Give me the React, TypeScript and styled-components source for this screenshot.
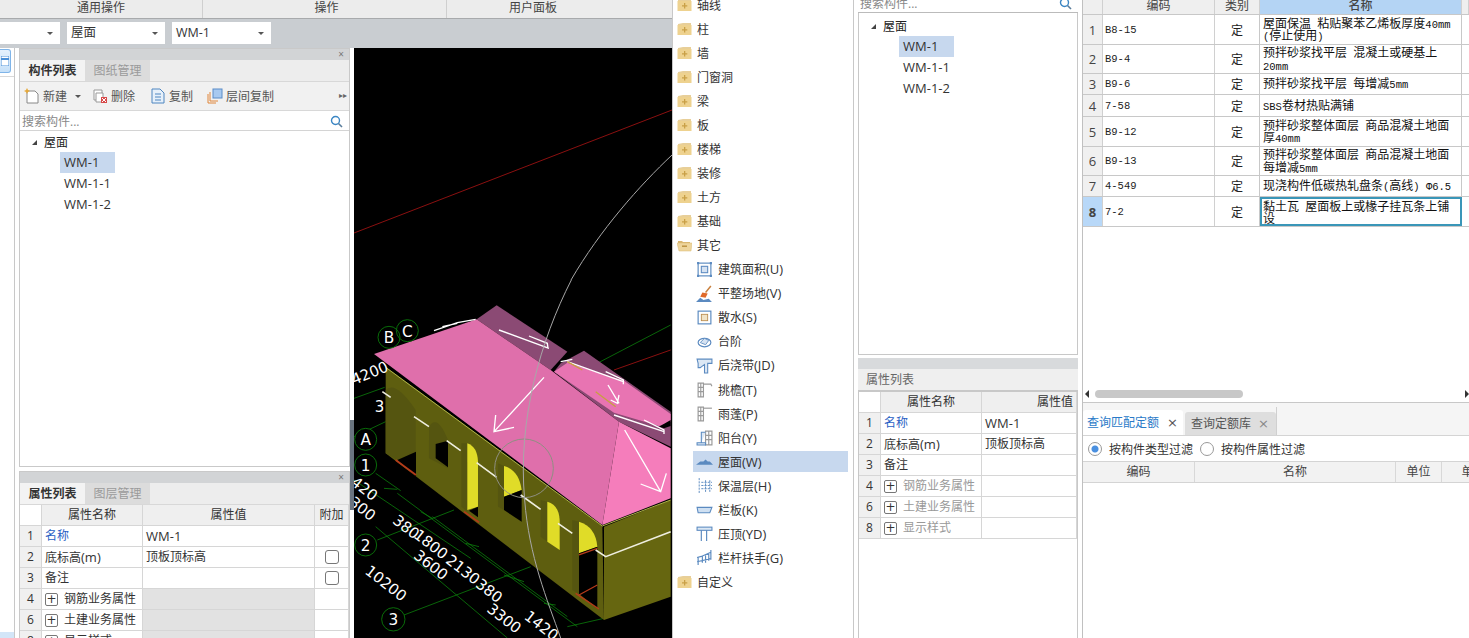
import React from 'react';
import styled, { createGlobalStyle } from 'styled-components';

const Global = createGlobalStyle`
  html, body { margin: 0; padding: 0; background: #fff; overflow: hidden; }
  * { box-sizing: border-box; }
  body { font-family: "Open Sans", "Noto Sans CJK SC", sans-serif; font-size: 12px; color: #333; }
`;

const Page = styled.div`
  width: 1469px; height: 638px; display: flex; overflow: hidden; background: #fff;
`;
const AppPane = styled.div`
  width: 672px; height: 638px; display: flex; flex-direction: column; flex: none;
`;
const Ribbon = styled.div`
  height: 19px; display: flex; background: #ececec; border-bottom: 1px solid #a8aaac; flex: none;
`;
const RibbonGroup = styled.div<{ $w: number; $last?: boolean; $pad?: number }>`
  width: ${p => p.$w}px; height: 18px; line-height: 15px; text-align: center; color: #444;
  padding-left: ${p => p.$pad ?? 0}px;
  border-right: ${p => (p.$last ? 'none' : '1px solid #cfcfcf')};
`;
const ComboBar = styled.div`
  height: 29px; background: #c9cdd1; display: flex; align-items: flex-start; gap: 7px; padding-top: 3px; flex: none;
`;
const Combo = styled.div<{ $w: number }>`
  width: ${p => p.$w}px; height: 22px; background: #fff; padding-left: 4px; line-height: 22px; font-size: 12.5px; position: relative;
  &::after { content: ''; position: absolute; right: 7px; top: 10px; border: 3px solid transparent; border-top: 3px solid #555; }
`;
const Body = styled.div`
  flex: 1; display: flex; min-height: 0;
`;
const Rail = styled.div`
  width: 15px; flex: none; border-right: 1px solid #c8c8c8; background: #fff; position: relative;
`;
const RailButton = styled.div`
  width: 11px; height: 24px; margin-top: 1px; border: 1px solid #7fb4e8; border-left: none; border-radius: 0 3px 3px 0; background: linear-gradient(#e4f1fd, #c6e0f8);
  display: flex; align-items: center; justify-content: center;
`;
const RailLine = styled.div`
  height: 1px; background: #d8d8d8; margin-top: 3px;
`;
const RailFoot = styled.div`
  position: absolute; left: 0; bottom: 0; width: 14px; height: 6px; background: #d3e6f8;
`;
const PanelColumn = styled.div`
  width: 331px; margin-left: 4px; flex: none; display: flex; flex-direction: column; gap: 4px; min-height: 0;
`;
const Panel = styled.div<{ $h?: number }>`
  border: 1px solid #c9c9c9; border-bottom-width: ${p => (p.$h ? 1 : 0)}px;
  ${p => (p.$h ? `height: ${p.$h}px; flex: none;` : 'flex: 1; min-height: 0;')}
  display: flex; flex-direction: column; overflow: hidden; background: #fff;
`;
const Grip = styled.div`
  height: 11px; flex: none; background: #d2d4d6; position: relative; color: #777; font-size: 10px; line-height: 10px; text-align: right; padding-right: 5px;
`;
const TabBar = styled.div`
  height: 22px; flex: none; background: #ededed; display: flex; border-bottom: 1px solid #d8d8d8;
`;
const PanelTab = styled.div<{ $on?: boolean }>`
  width: 65px; text-align: center; line-height: 22px; font-weight: ${p => (p.$on ? 700 : 400)};
  color: ${p => (p.$on ? '#333' : '#9a9a9a')}; background: ${p => (p.$on ? '#f3f3f3' : '#dcdcdc')};
`;
const ToolRow = styled.div`
  height: 29px; flex: none; background: #f1f1f1; display: flex; align-items: center; padding-left: 4px; color: #555; position: relative; border-bottom: 1px solid #d8d8d8;
`;
const Tool = styled.div<{ $ml: number }>`
  display: flex; align-items: center; gap: 3px; margin-left: ${p => p.$ml}px;
`;
const Overflow = styled.span`
  position: absolute; right: 2px; top: 7px; font-size: 8px; color: #666;
`;
const DropCaret = styled.span`
  width: 0; height: 0; border: 3px solid transparent; border-top: 3px solid #555; margin: 3px 0 0 5px;
`;
const SearchRow = styled.div<{ $h?: number }>`
  height: ${p => p.$h ?? 20}px; flex: none; border-bottom: 1px solid ${p => (p.$h ? '#bbb' : '#d4d4d4')}; display: flex; align-items: flex-end; justify-content: space-between;
  padding: 0 6px 0 2px; color: #888; line-height: 17px; background: #fff; overflow: hidden;
`;
const Tree = styled.div<{ $left: number; $top: number }>`
  padding: ${p => p.$top}px 0 0 ${p => p.$left}px; flex: 1; background: #fff;
`;
const TreeRoot = styled.div`
  height: 20px; line-height: 21px; display: flex; align-items: center; gap: 7px; font-size: 12px; color: #222;
`;
const Tri = styled.span`
  width: 0; height: 0; border-bottom: 5px solid #444; border-left: 5px solid transparent;
`;
const TreeItem = styled.div<{ $on?: boolean }>`
  width: 55px; height: 21px; line-height: 21px; margin-left: 28px; padding-left: 4px; white-space: nowrap;
  background: ${p => (p.$on ? '#c7d8ee' : 'transparent')}; color: #333; font-size: 13px;
`;
const PropGrid = styled.div<{ $cols: string }>`
  display: grid; grid-template-columns: ${p => p.$cols}; grid-auto-rows: 21px; flex: none;
`;
const Cell = styled.div<{ $bg?: string; $c?: string; $center?: boolean; $right?: boolean }>`
  border-right: 1px solid #d6d6d6; border-bottom: 1px solid #d6d6d6; line-height: 20px; padding: 0 3px; white-space: nowrap; overflow: hidden;
  background: ${p => p.$bg ?? '#fff'}; color: ${p => p.$c ?? '#333'};
  text-align: ${p => (p.$center ? 'center' : p.$right ? 'right' : 'left')};
  display: flex; align-items: center; gap: 6px; justify-content: ${p => (p.$center ? 'center' : p.$right ? 'flex-end' : 'flex-start')};
`;
const Latin = styled.span`
  font-size: 13px;
`;
const Plus = styled.span`
  width: 13px; height: 13px; border: 1px solid #777; border-radius: 2px; font-size: 12px; line-height: 10px; text-align: center; color: #333; font-family: "DejaVu Sans", sans-serif; flex: none;
`;
const Check = styled.span`
  width: 14px; height: 14px; border: 1px solid #777; border-radius: 3px; background: #fff;
`;
const Splitter = styled.div`
  width: 4px; flex: none; background: #fff; position: relative;
  &::after { content: ''; position: absolute; left: 0; top: 372px; width: 4px; height: 90px; background: #6a7480; }
`;
const Canvas = styled.div`
  flex: 1; background: #000; min-width: 0;
  svg { display: block; width: 100%; height: 100%; }
`;
const FolderPane = styled.div`
  width: 182px; flex: none; height: 638px; border-left: 1px solid #c8c8c8; border-right: 1px solid #c8c8c8; overflow: hidden; padding-left: 4px;
`;
const FolderList = styled.div`
  margin-top: -7px;
`;
const FolderRow = styled.div<{ $depth?: number }>`
  height: 24.04px; display: flex; align-items: center; color: #333; gap: 5px; padding-left: ${p => (p.$depth ? 16 : 0)}px; font-size: 12px;
`;
const LeafBand = styled.div<{ $on?: boolean }>`
  width: 155px; height: 21px; display: flex; align-items: center; gap: 5px; padding-left: 3px; background: ${p => (p.$on ? '#c7d8ee' : 'transparent')};
`;
const MiddlePane = styled.div`
  width: 220px; margin-left: 4px; flex: none; height: 638px; display: flex; flex-direction: column;
`;
const TreeBox = styled.div`
  height: 342px; flex: none; border: 1px solid #c8c8c8; border-top: none; display: flex;
`;
const GripPlain = styled.div`
  height: 11px; margin-top: 3px; flex: none; background: #d8dadc;
`;
const TitleBar = styled.div`
  height: 23px; flex: none; background: #efefef; line-height: 21px; padding-left: 8px; color: #666; border-bottom: 2px solid #c8c8c8;
`;
const MidTable = styled.div`
  border-left: 1px solid #c8c8c8; border-right: 1px solid #c8c8c8; flex: 1; overflow: hidden;
`;
const RightPane = styled.div`
  flex: 1; margin-left: 4px; height: 638px; border-left: 1px solid #c0c0c0; display: flex; flex-direction: column; min-width: 0; overflow: hidden;
`;
const QuotaHead = styled.div`
  height: 15px; flex: none; display: grid; grid-template-columns: 20px 112px 45px 202px 1fr; line-height: 12px; background: #f0f0f0; border-bottom: 1px solid #c8c8c8; color: #444;
`;
const HeadCell = styled.div<{ $on?: boolean }>`
  text-align: center; border-right: 1px solid #d0d0d0; background: ${p => (p.$on ? '#b4d4f4' : '#efefef')}; overflow: hidden; font-weight: ${p => (p.$on ? 500 : 400)};
`;
const QuotaRow = styled.div<{ $h: number }>`
  height: ${p => p.$h}px; flex: none; display: grid; grid-template-columns: 20px 112px 45px 202px 1fr; border-bottom: 1px solid #c8c8c8;
`;
const NumCell = styled.div<{ $on?: boolean }>`
  background: ${p => (p.$on ? '#b8d8f8' : '#f0f0f0')}; border-right: 1px solid #d0d0d0; display: flex; align-items: center; justify-content: center;
  font-size: 13px; color: #444; font-weight: ${p => (p.$on ? 700 : 400)};
`;
const CodeCell = styled.div`
  font-family: "Liberation Mono", monospace; font-size: 10.5px; color: #222; padding-left: 2px; display: flex; align-items: center; border-right: 1px solid #d0d0d0;
`;
const TypeCell = styled.div`
  display: flex; align-items: center; justify-content: center; border-right: 1px solid #c8c8c8; color: #222;
`;
const NameCell = styled.div<{ $edit?: boolean }>`
  font-size: 12px; line-height: 10.5px; color: #111; padding: 1px 0 0 3px; display: flex; align-items: center; border-right: 1px solid #c8c8c8;
  font-family: "Noto Sans CJK SC", sans-serif;
  ${p => (p.$edit ? 'outline: 2px solid #3a96b8; outline-offset: -2px;' : '')}
`;
const NameLine = styled.span`
  display: block; white-space: pre;
`;
const Mono = styled.span`
  font-family: "Liberation Mono", monospace; font-size: 10.5px;
`;
const QuotaBlank = styled.div`
  height: 160px; flex: none;
`;
const ScrollBar = styled.div`
  height: 14px; flex: none; display: flex; align-items: center; padding: 0 2px; position: relative; margin-bottom: 1px;
`;
const Thumb = styled.div`
  width: 148px; height: 8px; margin-left: 6px; border-radius: 4px; background: #c8c8c8;
`;
const ArrowL = styled.span`
  width: 0; height: 0; border: 4px solid transparent; border-right: 4px solid #333; border-left: none;
`;
const ArrowR = styled.span`
  position: absolute; right: 0; width: 0; height: 0; border: 4px solid transparent; border-left: 4px solid #333; border-right: none;
`;
const QueryTabs = styled.div`
  height: 34px; flex: none; display: flex; align-items: flex-end; background: #f5f5f5; border-top: 1px solid #c8c8c8; border-bottom: 1px solid #d4d4d4;
`;
const QueryTab = styled.div<{ $on?: boolean }>`
  height: ${p => (p.$on ? 25 : 23)}px; width: ${p => (p.$on ? 100 : 91)}px; margin-right: ${p => (p.$on ? 2 : 0)}px;
  background: ${p => (p.$on ? '#fff' : '#dedede')}; color: ${p => (p.$on ? '#2a7ac8' : '#555')};
  line-height: 24px; padding-left: ${p => (p.$on ? 4 : 6)}px; border-radius: 3px 3px 0 0; display: flex; gap: ${p => (p.$on ? 8 : 7)}px; align-items: center;
  font-size: 12px; white-space: nowrap;
  i { font-style: normal; font-size: 13px; color: ${p => (p.$on ? '#555' : '#888')}; font-family: "DejaVu Sans", sans-serif; }
`;
const TabEnd = styled.div`
  width: 1px; height: 28px; background: #d0d0d0;
`;
const RadioRow = styled.div`
  height: 26px; flex: none; display: flex; align-items: center; padding-left: 5px; background: #fff; border-bottom: 1px solid #d4d4d4; color: #333; gap: 7px;
`;
const Radio = styled.span<{ $on?: boolean }>`
  width: 14px; height: 14px; border-radius: 50%; border: 1px solid #999; flex: none; background: ${p => (p.$on ? 'radial-gradient(circle, #4a90e0 0 3px, #fff 4px)' : '#fff')};
`;
const LowerHead = styled.div`
  height: 21px; flex: none; display: grid; grid-template-columns: 112px 201px 46px 64px; background: #f2f2f2; border-bottom: 1px solid #d4d4d4; line-height: 20px; color: #444;
`;
const LowerCell = styled.div`
  text-align: center; border-right: 1px solid #d8d8d8; overflow: hidden; white-space: nowrap;
`;

const Folder = ({ open }: { open?: boolean }) => (
  <svg width="15" height="14" viewBox="0 0 15 14" style={{ flex: 'none' }}>
    {open ? (
      <>
        <path d="M1 3h4l1 1h7v2H4L1 6z" fill="#d9b56f" />
        <path d="M0 5h15l-1 8H2z" fill="#eed59c" stroke="#d8b873" strokeWidth=".5" />
        <rect x="5" y="7.5" width="5" height="1.4" fill="#b98f3e" />
      </>
    ) : (
      <>
        <path d="M1 2l5-1 8 0v3H1z" fill="#e8cf98" />
        <rect x="0.5" y="3" width="14" height="10" fill="#eed28f" />
        <path d="M7 5v2.2h-2v1.3h2v2h1.3v-2h2V7.200h-2V5z" fill="#c9a047" />
      </>
    )}
  </svg>
);

const B = '#5b8ac0';
const G = '#9a9a9a';
const Leaf = ({ k }: { k: string }) => {
  const p = { fill: 'none', stroke: B, strokeWidth: 1.1 };
  const q = { fill: 'none', stroke: G, strokeWidth: 1.1 };
  let c: React.ReactNode = null;
  if (k === 'area') c = <><rect x="2" y="2" width="12" height="12" {...p} /><rect x="5" y="5" width="6" height="6" fill="#d5e2f2" stroke={B} /><path d="M1 1h2v2H1zM13 1h2v2h-2zM1 13h2v2H1zM13 13h2v2h-2z" fill={B} /></>;
  if (k === 'site') c = <><path d="M9 7l5-6" stroke="#c9803e" strokeWidth="1.4" /><path d="M6 7l5 1-2 4-5-1z" fill="#e06a2a" /><path d="M0 16l4-4 3 2 5-1 3 3z" fill="#5b8ac0" /></>;
  if (k === 'apron') c = <><rect x="2" y="2" width="12" height="12" {...p} /><rect x="5" y="5" width="6" height="6" fill="#f1e3c6" stroke="#b98a4a" strokeWidth=".8" /></>;
  if (k === 'step') c = <><ellipse cx="8" cy="9" rx="6" ry="4" {...p} /><path d="M4 9l4-4 4 2-3 4z" fill="#d5e2f2" stroke={B} strokeWidth=".8" /></>;
  if (k === 'strip') c = <path d="M1 2h14v4H11v9H8V7L4 10H2V6z" fill="#dbe7f4" stroke={B} />;
  if (k === 'eave') c = <><path d="M2 2h5v13H2zM2 6h5M2 10h5M4.500 2v13" {...q} /><path d="M7 3h7l1 2" {...q} /></>;
  if (k === 'canopy') c = <><path d="M2 2h5v13H2zM2 6h5M2 10h5M4.500 2v13" {...q} /><path d="M7 3h8" {...q} /></>;
  if (k === 'balc') c = <><path d="M9 2h6v13H9zM9 6h6M9 10h6M12 2v13" {...q} /><path d="M1 13h8v2H1zM5 13V3h4" fill="#dbe7f4" stroke={B} /></>;
  if (k === 'roof') c = <path d="M0 11l4-3h3l2-2 2 2h2l3 3z" fill={B} />;
  if (k === 'ins') c = <path d="M3 1v14M9 3v11M13 3v11M5 5h10M5 8h10M5 11h10" stroke={B} strokeWidth=".9" strokeDasharray="2 1" fill="none" />;
  if (k === 'rail') c = <path d="M1 6h14l-2 5H2z" fill="#cfe0f2" stroke={B} />;
  if (k === 'coping') c = <><rect x="1" y="2" width="14" height="3" fill="#dbe7f4" stroke={B} /><path d="M5 5v10M10 5v10" {...p} /></>;
  if (k === 'hand') c = <path d="M1 8l4-1 9-4M2 8v7M6 7v6M9 6v7M12 4v7M14 1v9M1 12l13-3" {...p} />;
  return <svg width="17" height="17" viewBox="0 0 16 16" style={{ flex: 'none' }}>{c}</svg>;
};

const SearchGlyph = () => (
  <svg width="13" height="13" viewBox="0 0 13 13" style={{ marginBottom: 2 }}>
    <circle cx="5.5" cy="5.5" r="4" fill="none" stroke="#3b86c4" strokeWidth="1.4" />
    <path d="M8.500 8.500l3.500 3.500" stroke="#5a7d9c" strokeWidth="1.6" />
  </svg>
);

const ToolIcon = ({ k }: { k: string }) => (
  <svg width="16" height="16" viewBox="0 0 16 16" style={{ flex: 'none' }}>
    {k === 'new' && <><path d="M3 3h8l3 3v9H3z" fill="#fff" stroke="#888" /><path d="M3 0l1 2 2 1-2 1-1 2-1-2-2-1 2-1z" fill="#e6a93a" /></>}
    {k === 'del' && <><path d="M2 2h8v10H2z" fill="#fff" stroke="#999" /><path d="M4 5h7v9H4z" fill="#fff" stroke="#999" /><rect x="9" y="9" width="6" height="6" fill="#d84a4a" /><path d="M10 10l4 4M14 10l-4 4" stroke="#fff" /></>}
    {k === 'copy' && <><path d="M2 1h8l4 4v10H2z" fill="#e6f0fa" stroke="#4f86c0" /><path d="M5 6h6M5 9h6M5 12h6" stroke="#4f86c0" /></>}
    {k === 'floor' && <><path d="M1 6v9h8M3 4v9h8" fill="none" stroke="#e0863a" /><rect x="6" y="1" width="9" height="9" fill="#a7c9f0" stroke="#5a8cc8" /></>}
  </svg>
);

const Scene = () => (
  <svg viewBox="354 48 318 590" preserveAspectRatio="none">
    <path d="M354 233L672 110" stroke="#8a1010" strokeWidth="1" />
    <path d="M672 155C640 185 600 230 571 280" stroke="#a8a8a8" strokeWidth="1" fill="none" />
    <g transform="translate(354 280) scale(0.33333)" fontFamily="'DejaVu Sans', sans-serif">
      <g stroke="#0b7d0b" strokeWidth="2.4" fill="none">
        <path d="M720 255L950 135M0 355L92 322M0 470L95 425M70 780L300 690M150 1005L530 860M640 1040L750 1015" />
        <path d="M65 580L140 632M0 600L350 835M65 740L460 1074M130 640L670 1040M235 710L640 1010M90 625L130 628M200 695L235 715M335 790L375 800M450 885L510 905M570 970L605 975" />
      </g>
      <path d="M780 270L950 210" stroke="#8a1010" strokeWidth="3" />
      <path d="M368 118L428 76 640 215 590 270z" fill="#8b4a74" />
      <path d="M620 250L690 212 950 395 950 500 795 425 600 275z" fill="#8b4a74" />
      <path d="M600 275L640 248 810 302 950 402 950 425 915 438 780 398z" fill="#e874b2" />
      <path d="M915 440L950 420 950 438 930 445z" fill="#000" />
      <path d="M60 222L368 118 590 270 795 425 745 735z" fill="#df6fab" />
      <path d="M795 425L950 505 950 655 745 735z" fill="#f57dbb" />
      <path d="M95 260L745 738 750 1020 95 520z" fill="#5e5e0f" />
      <path d="M750 740L950 660 950 950 750 1020z" fill="#666610" />
      <path d="M95 330Q125 300 185 390L185 520 130 540 95 520z" fill="#555510" />
      <path d="M130 540L186 515 186 590z" fill="#000" />
      <path d="M125 540L186 585" stroke="#b53a1a" strokeWidth="5" />
      <path d="M225 440Q250 400 282 480L282 565 225 535z" fill="#555510" />
      <path d="M245 492L282 482 282 562 245 535z" fill="#000" />
      <path d="M322 490L340 490 340 695 322 680zM432 550L450 558 450 690 432 680zM560 660L580 665 580 785 560 770zM655 720L675 725 675 942 655 930z" fill="#555510" />
      <path d="M340 490Q370 500 372 545L372 680 340 690z" fill="#e0dc28" />
      <path d="M345 692L372 680 372 712z" fill="#000" />
      <path d="M330 695L375 727" stroke="#b53a1a" strokeWidth="5" />
      <path d="M450 558Q495 570 503 630L450 650z" fill="#e0dc28" />
      <path d="M450 650L503 630 503 725 450 690z" fill="#000" />
      <path d="M580 665Q615 675 617 720L617 810 580 785z" fill="#e0dc28" />
      <path d="M675 725Q725 740 730 800L675 820z" fill="#e0dc28" />
      <path d="M675 820L730 800 730 985 675 942z" fill="#000" />
      <path d="M665 940L735 987M675 825L730 805M675 945L730 915" stroke="#b53a1a" strokeWidth="4" />
      <path d="M95 262L745 738 950 660" stroke="#b0b448" strokeWidth="3" fill="none" />
      <g stroke="#efeee0" strokeWidth="5" fill="none">
        <path d="M180 410L225 440M278 482L320 512M368 548L428 592M500 645L560 688M612 730L655 760M725 810L755 830 950 755" />
        <path d="M85 335L110 352" />
      </g>
      <g stroke="#fff" strokeWidth="4" fill="none">
        <path d="M570 292L420 455M425 405L420 455 480 442M812 450L920 635M860 612L920 635 937 580" />
        <path d="M240 152L310 128 365 118M265 140L310 130M435 150L585 205M525 168L580 190 582 205M620 245L655 238M640 245L808 305M755 275L808 300 808 313M762 315L795 370M795 345L790 370 770 360M780 405L930 455M870 420L930 450 930 462" />
      </g>
      <path d="M640 245L685 270M725 335L785 380" stroke="#c8a040" strokeWidth="4" />
      <circle cx="510" cy="565" r="88" fill="none" stroke="#8f8f82" strokeWidth="3" />
      <path d="M652 0C560 180 490 420 512 660C525 830 580 960 620 1074" fill="none" stroke="#a8a8a8" strokeWidth="3" />
      <g stroke="#0b7d0b" strokeWidth="2.6" fill="#000">
        <circle cx="105" cy="172" r="33" fill="none" />
        <circle cx="160" cy="152" r="33" fill="none" />
        <circle cx="35" cy="478" r="33" />
        <circle cx="35" cy="555" r="33" />
        <circle cx="35" cy="795" r="33" />
        <circle cx="118" cy="1018" r="35" />
      </g>
      <g fill="#fff" fontSize="46" textAnchor="middle">
        <text x="105" y="190">B</text>
        <text x="160" y="170">C</text>
        <text x="35" y="496">A</text>
        <text x="35" y="573">1</text>
        <text x="35" y="813">2</text>
        <text x="118" y="1036">3</text>
      </g>
      <g fill="#fff" fontSize="45">
        <text x="0" y="315" transform="rotate(-22 0 315)">4200</text>
        <text x="62" y="395">3</text>
        <text x="-12" y="612" transform="rotate(38 -12 612)">420</text>
        <text x="-18" y="672" transform="rotate(38 -18 672)">300</text>
        <text x="113" y="727" transform="rotate(38 113 727)">380</text>
        <text x="176" y="770" transform="rotate(38 176 770)">1800</text>
        <text x="176" y="832" transform="rotate(38 176 832)">3600</text>
        <text x="272" y="846" transform="rotate(38 272 846)">2130</text>
        <text x="362" y="918" transform="rotate(38 362 918)">380</text>
        <text x="30" y="878" transform="rotate(38 30 878)">10200</text>
        <text x="396" y="992" transform="rotate(38 396 992)">3300</text>
        <text x="508" y="1014" transform="rotate(38 508 1014)">1420</text>
      </g>
    </g>
  </svg>
);

const mix = (t: string, W: typeof Latin | typeof Mono) =>
  t.split(/([A-Za-z0-9().\-Φ ]+)/).map((s, i) => (i % 2 ? <W key={i}>{s}</W> : s));

const LabelMix = ({ t }: { t: string }) => <span>{mix(t, Latin)}</span>;

const folders = ['轴线', '柱', '墙', '门窗洞', '梁', '板', '楼梯', '装修', '土方', '基础'];
const leaves: [string, string][] = [
  ['area', '建筑面积(U)'], ['site', '平整场地(V)'], ['apron', '散水(S)'], ['step', '台阶'], ['strip', '后浇带(JD)'],
  ['eave', '挑檐(T)'], ['canopy', '雨蓬(P)'], ['balc', '阳台(Y)'], ['roof', '屋面(W)'], ['ins', '保温层(H)'],
  ['rail', '栏板(K)'], ['coping', '压顶(YD)'], ['hand', '栏杆扶手(G)'],
];
const quotas: { h: number; code: string; lines: string[] }[] = [
  { h: 30, code: 'B8-15', lines: ['屋面保温 粘贴聚苯乙烯板厚度40mm', '(停止使用)'] },
  { h: 29, code: 'B9-4', lines: ['预拌砂浆找平层 混凝土或硬基上', '20mm'] },
  { h: 21, code: 'B9-6', lines: ['预拌砂浆找平层 每增减5mm'] },
  { h: 22, code: '7-58', lines: ['SBS卷材热贴满铺'] },
  { h: 30, code: 'B9-12', lines: ['预拌砂浆整体面层 商品混凝土地面', '厚40mm'] },
  { h: 29, code: 'B9-13', lines: ['预拌砂浆整体面层 商品混凝土地面', '每增减5mm'] },
  { h: 21, code: '4-549', lines: ['现浇构件低碳热轧盘条(高线) Φ6.5'] },
  { h: 30, code: '7-2', lines: ['黏土瓦 屋面板上或椽子挂瓦条上铺', '设'] },
];

const TreeContent = () => (
  <>
    <TreeRoot><Tri />屋面</TreeRoot>
    <TreeItem $on>WM-1</TreeItem>
    <TreeItem>WM-1-1</TreeItem>
    <TreeItem>WM-1-2</TreeItem>
  </>
);

const NUM = '#f0f0f0';
const GREYCELL = '#e2e2e2';

export default function App() {
  return (
    <Page>
      <Global />
      <AppPane>
        <Ribbon>
          <RibbonGroup $w={203}>通用操作</RibbonGroup>
          <RibbonGroup $w={244} $pad={4}>操作</RibbonGroup>
          <RibbonGroup $w={172} $last>用户面板</RibbonGroup>
        </Ribbon>
        <ComboBar>
          <Combo $w={60} />
          <Combo $w={98}>屋面</Combo>
          <Combo $w={99}>WM-1</Combo>
        </ComboBar>
        <Body>
          <Rail>
            <RailButton>
              <svg width="8" height="10" viewBox="0 0 8 10"><rect x="0" y="0" width="8" height="10" fill="#fff" stroke="#4a90d8" /><path d="M0 3h8" stroke="#4a90d8" strokeWidth="2" /></svg>
            </RailButton>
            <RailLine />
            <RailFoot />
          </Rail>
          <PanelColumn>
            <Panel $h={419}>
              <Grip>×</Grip>
              <TabBar><PanelTab $on>构件列表</PanelTab><PanelTab>图纸管理</PanelTab></TabBar>
              <ToolRow>
                <Tool $ml={0}><ToolIcon k="new" />新建<DropCaret /></Tool>
                <Tool $ml={11}><ToolIcon k="del" />删除</Tool>
                <Tool $ml={15}><ToolIcon k="copy" />复制</Tool>
                <Tool $ml={14}><ToolIcon k="floor" />层间复制</Tool>
                <Overflow>▸▸</Overflow>
              </ToolRow>
              <SearchRow>搜索构件...<SearchGlyph /></SearchRow>
              <Tree $left={12} $top={1}><TreeContent /></Tree>
            </Panel>
            <Panel>
              <Grip>×</Grip>
              <TabBar><PanelTab $on>属性列表</PanelTab><PanelTab>图层管理</PanelTab></TabBar>
              <PropGrid $cols="22px 101px 172px 1fr">
                <Cell $bg="#fff" /><Cell $bg="#efefef" $center>属性名称</Cell><Cell $bg="#efefef" $center>属性值</Cell><Cell $bg="#efefef" $center>附加</Cell>
                <Cell $bg={NUM} $center>1</Cell><Cell $c="#2a5fc4">名称</Cell><Cell><Latin>WM-1</Latin></Cell><Cell />
                <Cell $bg={NUM} $center>2</Cell><Cell><LabelMix t="底标高(m)" /></Cell><Cell>顶板顶标高</Cell><Cell $center><Check /></Cell>
                <Cell $bg={NUM} $center>3</Cell><Cell>备注</Cell><Cell /><Cell $center><Check /></Cell>
                <Cell $bg={NUM} $center>4</Cell><Cell><Plus>+</Plus>钢筋业务属性</Cell><Cell $bg={GREYCELL} /><Cell />
                <Cell $bg={NUM} $center>6</Cell><Cell><Plus>+</Plus>土建业务属性</Cell><Cell $bg={GREYCELL} /><Cell />
                <Cell $bg={NUM} $center>8</Cell><Cell><Plus>+</Plus>显示样式</Cell><Cell $bg={GREYCELL} /><Cell />
              </PropGrid>
            </Panel>
          </PanelColumn>
          <Splitter />
          <Canvas><Scene /></Canvas>
        </Body>
      </AppPane>

      <FolderPane>
        <FolderList>
          {folders.map(f => <FolderRow key={f}><Folder />{f}</FolderRow>)}
          <FolderRow><Folder open />其它</FolderRow>
          {leaves.map(([k, t]) => (
            <FolderRow key={k} $depth={1}>
              <LeafBand $on={k === 'roof'}><Leaf k={k} /><LabelMix t={t} /></LeafBand>
            </FolderRow>
          ))}
          <FolderRow><Folder />自定义</FolderRow>
        </FolderList>
      </FolderPane>

      <MiddlePane>
        <SearchRow $h={13}>
          搜索构件...<SearchGlyph />
        </SearchRow>
        <TreeBox><Tree $left={12} $top={3}><TreeContent /></Tree></TreeBox>
        <GripPlain />
        <TitleBar>属性列表</TitleBar>
        <MidTable>
          <PropGrid $cols="22px 101px 1fr">
            <Cell /><Cell $bg="#efefef" $center>属性名称</Cell><Cell $bg="#efefef" $right>属性值</Cell>
            <Cell $bg={NUM} $center>1</Cell><Cell $c="#2a5fc4">名称</Cell><Cell><Latin>WM-1</Latin></Cell>
            <Cell $bg={NUM} $center>2</Cell><Cell><LabelMix t="底标高(m)" /></Cell><Cell>顶板顶标高</Cell>
            <Cell $bg={NUM} $center>3</Cell><Cell>备注</Cell><Cell />
            <Cell $bg={NUM} $center>4</Cell><Cell $c="#999"><Plus>+</Plus>钢筋业务属性</Cell><Cell />
            <Cell $bg={NUM} $center>6</Cell><Cell $c="#999"><Plus>+</Plus>土建业务属性</Cell><Cell />
            <Cell $bg={NUM} $center>8</Cell><Cell $c="#999"><Plus>+</Plus>显示样式</Cell><Cell />
          </PropGrid>
        </MidTable>
      </MiddlePane>

      <RightPane>
        <QuotaHead>
          <HeadCell /><HeadCell>编码</HeadCell><HeadCell>类别</HeadCell><HeadCell $on>名称</HeadCell><HeadCell />
        </QuotaHead>
        {quotas.map((q, i) => (
          <QuotaRow key={q.code} $h={q.h}>
            <NumCell $on={i === 7}>{i + 1}</NumCell>
            <CodeCell>{q.code}</CodeCell>
            <TypeCell>定</TypeCell>
            <NameCell $edit={i === 7}><div>{q.lines.map(l => <NameLine key={l}>{mix(l, Mono)}</NameLine>)}</div></NameCell>
            <div />
          </QuotaRow>
        ))}
        <QuotaBlank />
        <ScrollBar><ArrowL /><Thumb /><ArrowR /></ScrollBar>
        <QueryTabs>
          <QueryTab $on>查询匹配定额<i>×</i></QueryTab>
          <QueryTab>查询定额库<i>×</i></QueryTab>
          <TabEnd />
        </QueryTabs>
        <RadioRow>
          <Radio $on /><span>按构件类型过滤</span>
          <Radio /><span>按构件属性过滤</span>
        </RadioRow>
        <LowerHead>
          <LowerCell>编码</LowerCell><LowerCell>名称</LowerCell><LowerCell>单位</LowerCell><LowerCell>单价</LowerCell>
        </LowerHead>
      </RightPane>
    </Page>
  );
}
